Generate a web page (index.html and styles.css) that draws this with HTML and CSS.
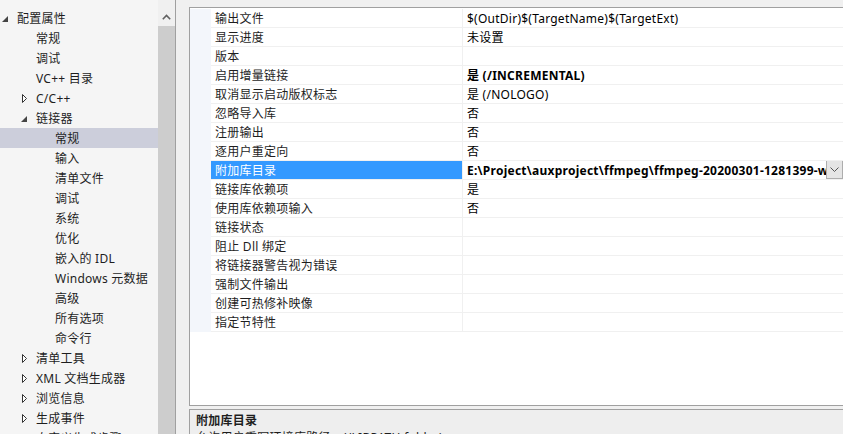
FILE: index.html
```html
<!DOCTYPE html>
<html lang="zh-CN">
<head>
<meta charset="utf-8">
<title>配置属性</title>
<link rel="stylesheet" href="styles.css">
</head>
<body>
<div class="app">
  <div class="tree-pane">
    <ul class="tree">
      <li class="item l0"><span class="tw"><svg class="exp" width="6" height="6" viewBox="0 0 6 6"><polygon points="6,0 6,6 0,6"/></svg></span><span>配置属性</span></li>
      <li class="item l1"><span class="tw"></span><span>常规</span></li>
      <li class="item l1"><span class="tw"></span><span>调试</span></li>
      <li class="item l1"><span class="tw"></span><span>VC++ 目录</span></li>
      <li class="item l1"><span class="tw"><svg class="col" width="5" height="9" viewBox="0 0 5 9"><polygon points="0.5,0.5 4.5,4.5 0.5,8.5"/></svg></span><span>C/C++</span></li>
      <li class="item l1"><span class="tw"><svg class="exp" width="6" height="6" viewBox="0 0 6 6"><polygon points="6,0 6,6 0,6"/></svg></span><span>链接器</span></li>
      <li class="item l2 selected"><span class="tw"></span><span>常规</span></li>
      <li class="item l2"><span class="tw"></span><span>输入</span></li>
      <li class="item l2"><span class="tw"></span><span>清单文件</span></li>
      <li class="item l2"><span class="tw"></span><span>调试</span></li>
      <li class="item l2"><span class="tw"></span><span>系统</span></li>
      <li class="item l2"><span class="tw"></span><span>优化</span></li>
      <li class="item l2"><span class="tw"></span><span>嵌入的 IDL</span></li>
      <li class="item l2"><span class="tw"></span><span>Windows 元数据</span></li>
      <li class="item l2"><span class="tw"></span><span>高级</span></li>
      <li class="item l2"><span class="tw"></span><span>所有选项</span></li>
      <li class="item l2"><span class="tw"></span><span>命令行</span></li>
      <li class="item l1"><span class="tw"><svg class="col" width="5" height="9" viewBox="0 0 5 9"><polygon points="0.5,0.5 4.5,4.5 0.5,8.5"/></svg></span><span>清单工具</span></li>
      <li class="item l1"><span class="tw"><svg class="col" width="5" height="9" viewBox="0 0 5 9"><polygon points="0.5,0.5 4.5,4.5 0.5,8.5"/></svg></span><span>XML 文档生成器</span></li>
      <li class="item l1"><span class="tw"><svg class="col" width="5" height="9" viewBox="0 0 5 9"><polygon points="0.5,0.5 4.5,4.5 0.5,8.5"/></svg></span><span>浏览信息</span></li>
      <li class="item l1"><span class="tw"><svg class="col" width="5" height="9" viewBox="0 0 5 9"><polygon points="0.5,0.5 4.5,4.5 0.5,8.5"/></svg></span><span>生成事件</span></li>
      <li class="item l1"><span class="tw"><svg class="col" width="5" height="9" viewBox="0 0 5 9"><polygon points="0.5,0.5 4.5,4.5 0.5,8.5"/></svg></span><span>自定义生成步骤</span></li>
    </ul>
    <div class="vscroll">
      <div class="sbtn"><svg width="9" height="6" viewBox="0 0 9 6"><polyline points="0.8,5.2 4.5,1.5 8.2,5.2"/></svg></div>
      <div class="thumb"></div>
    </div>
  </div>

  <div class="main">
    <div class="grid">
      <div class="row"><div class="gutter"></div><div class="name">输出文件</div><div class="val">$(OutDir)$(TargetName)$(TargetExt)</div></div>
      <div class="row"><div class="gutter"></div><div class="name">显示进度</div><div class="val">未设置</div></div>
      <div class="row"><div class="gutter"></div><div class="name">版本</div><div class="val"></div></div>
      <div class="row"><div class="gutter"></div><div class="name">启用增量链接</div><div class="val bold">是 (/INCREMENTAL)</div></div>
      <div class="row"><div class="gutter"></div><div class="name">取消显示启动版权标志</div><div class="val">是 (/NOLOGO)</div></div>
      <div class="row"><div class="gutter"></div><div class="name">忽略导入库</div><div class="val">否</div></div>
      <div class="row"><div class="gutter"></div><div class="name">注册输出</div><div class="val">否</div></div>
      <div class="row"><div class="gutter"></div><div class="name">逐用户重定向</div><div class="val">否</div></div>
      <div class="row active"><div class="gutter"></div><div class="name">附加库目录</div><div class="val bold edit"><span class="vtext">E:\Project\auxproject\ffmpeg\ffmpeg-20200301-1281399-win64-dev\lib;%(AdditionalLibraryDirectories)</span><span class="dd"><svg width="9" height="5" viewBox="0 0 9 5"><polyline points="0.5,0.5 4.5,4.5 8.5,0.5"/></svg></span></div></div>
      <div class="row"><div class="gutter"></div><div class="name">链接库依赖项</div><div class="val">是</div></div>
      <div class="row"><div class="gutter"></div><div class="name">使用库依赖项输入</div><div class="val">否</div></div>
      <div class="row"><div class="gutter"></div><div class="name">链接状态</div><div class="val"></div></div>
      <div class="row"><div class="gutter"></div><div class="name">阻止 Dll 绑定</div><div class="val"></div></div>
      <div class="row"><div class="gutter"></div><div class="name">将链接器警告视为错误</div><div class="val"></div></div>
      <div class="row"><div class="gutter"></div><div class="name">强制文件输出</div><div class="val"></div></div>
      <div class="row"><div class="gutter"></div><div class="name">创建可热修补映像</div><div class="val"></div></div>
      <div class="row"><div class="gutter"></div><div class="name">指定节特性</div><div class="val"></div></div>
    </div>
    <div class="desc">
      <div class="desc-title">附加库目录</div>
      <div class="desc-text">允许用户重写环境库路径。(/LIBPATH:folder)</div>
    </div>
  </div>
</div>
</body>
</html>
```
FILE: styles.css
```css
* { box-sizing: border-box; }
html, body { margin: 0; padding: 0; }
body {
  width: 843px;
  height: 434px;
  overflow: hidden;
  background: #f0f0f0;
  font-family: "Noto Sans", "Noto Sans CJK SC", sans-serif;
  font-size: 12px;
  letter-spacing: 0.25px;
  color: #1e1e1e;
}
.app { display: flex; height: 434px; }

/* tree */
.tree-pane {
  display: flex;
  flex: none;
  width: 176px;
  height: 434px;
  border-right: 1px solid #a0a0a0;
}
.tree {
  width: 158px;
  flex: none;
  margin: 0;
  padding: 8px 0 0;
  list-style: none;
  background: #f5f5f5;
  overflow: hidden;
}
.item {
  height: 20px;
  display: flex;
  align-items: center;
  white-space: nowrap;
}
.l1 { padding-left: 19px; }
.l2 { padding-left: 38px; }
.item.selected { background: #cccedb; }
.tw {
  width: 17px;
  flex: none;
  display: flex;
  align-items: center;
}
.tw .exp { margin-left: 2px; margin-top: 2px; fill: #444; }
.tw .col { margin-left: 3px; fill: #fff; stroke: #333; stroke-width: 1; }

.vscroll {
  width: 17px;
  flex: none;
  display: flex;
  flex-direction: column;
  background: #f0f0f0;
}
.sbtn {
  height: 26px;
  padding-top: 8px;
  display: flex;
  align-items: center;
  justify-content: center;
}
.sbtn svg { fill: none; stroke: #606060; stroke-width: 1.6; }
.thumb { flex: 1; background: #cdcdcd; }

/* main */
.main {
  flex: none;
  width: 655px;
  height: 434px;
  margin-left: 13px;
  display: flex;
  flex-direction: column;
}
.grid {
  flex: none;
  margin-top: 7px;
  height: 399px;
  padding-top: 1px;
  border: 1px solid #a0a0a0;
  background: #fff;
  overflow: hidden;
}
.row {
  display: grid;
  grid-template-columns: 21px 252px 1fr;
  height: 19px;
}
.gutter { background: #f3f6fb; }
.name, .val {
  height: 19px;
  border-bottom: 1px solid #f0f0f0;
  padding-left: 4px;
  padding-top: 1px;
  line-height: 18px;
  white-space: nowrap;
  overflow: hidden;
}
.name { border-right: 1px solid #f0f0f0; }
.val { color: #000; }
.bold { font-weight: bold; }
.row.active .name { background: #3399ff; color: #fff; }
.edit { display: flex; padding-right: 0; padding-top: 0; }
.vtext { flex: 1; overflow: hidden; white-space: nowrap; padding-top: 1px; }
.dd {
  flex: none;
  width: 17px;
  height: 19px;
  margin-top: -1px;
  border: 1px solid #adadad;
  background: #e5e5e5;
  display: flex;
  align-items: center;
  justify-content: center;
}
.dd svg { fill: none; stroke: #555; stroke-width: 1; }

.desc {
  flex: 1;
  min-height: 0;
  overflow: hidden;
  margin-top: 3px;
  border-top: 1px solid #a0a0a0;
  border-left: 1px solid #a0a0a0;
  background: #eeeeee;
  padding: 2px 6px 0;
  line-height: 17px;
}
.desc-title { font-weight: bold; color: #1e1e1e; }
.desc-text { color: #1e1e1e; white-space: nowrap; }
```
